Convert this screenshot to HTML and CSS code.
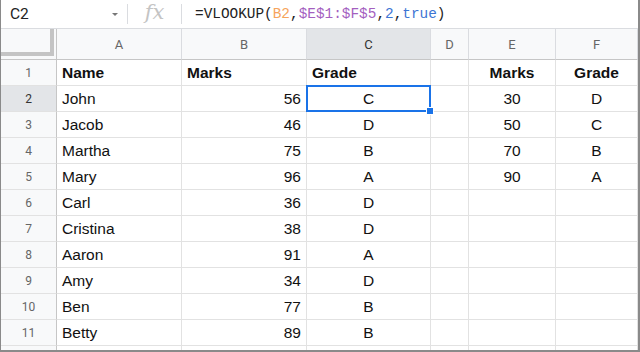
FILE: index.html
```html
<!DOCTYPE html>
<html lang="en">

<head>
     <meta charset="UTF-8" />
     <title>VLOOKUP grades</title>
     <meta name="viewport" content="width=device-width, initial-scale=1" />
     <link rel="stylesheet" href="styles.css">
</head>

<body>
     <div class="frame">
          <div class="formula-bar">
               <div class="name-box">
                    <span>C2</span>
                    <span class="caret"></span>
               </div>
               <div class="fx">fx</div>
               <div class="formula">=VLOOKUP(<span class="ref-b">B2</span>,<span class="ref-e">$E$1:$F$5</span>,<span class="num">2</span>,<span class="bool">true</span>)</div>
          </div>

          <div class="sheet">
               <div class="corner"><div class="freeze"></div></div>
               <div class="col-head">A</div>
               <div class="col-head">B</div>
               <div class="col-head active">C</div>
               <div class="col-head">D</div>
               <div class="col-head">E</div>
               <div class="col-head">F</div>

               <div class="row-head">1</div>
               <div class="cell bold">Name</div>
               <div class="cell bold">Marks</div>
               <div class="cell bold">Grade</div>
               <div class="cell"></div>
               <div class="cell bold center">Marks</div>
               <div class="cell bold center">Grade</div>

               <div class="row-head active">2</div>
               <div class="cell">John</div>
               <div class="cell right">56</div>
               <div class="cell center selected">C<span class="handle"></span></div>
               <div class="cell"></div>
               <div class="cell center">30</div>
               <div class="cell center">D</div>

               <div class="row-head">3</div>
               <div class="cell">Jacob</div>
               <div class="cell right">46</div>
               <div class="cell center">D</div>
               <div class="cell"></div>
               <div class="cell center">50</div>
               <div class="cell center">C</div>

               <div class="row-head">4</div>
               <div class="cell">Martha</div>
               <div class="cell right">75</div>
               <div class="cell center">B</div>
               <div class="cell"></div>
               <div class="cell center">70</div>
               <div class="cell center">B</div>

               <div class="row-head">5</div>
               <div class="cell">Mary</div>
               <div class="cell right">96</div>
               <div class="cell center">A</div>
               <div class="cell"></div>
               <div class="cell center">90</div>
               <div class="cell center">A</div>

               <div class="row-head">6</div>
               <div class="cell">Carl</div>
               <div class="cell right">36</div>
               <div class="cell center">D</div>
               <div class="cell"></div>
               <div class="cell"></div>
               <div class="cell"></div>

               <div class="row-head">7</div>
               <div class="cell">Cristina</div>
               <div class="cell right">38</div>
               <div class="cell center">D</div>
               <div class="cell"></div>
               <div class="cell"></div>
               <div class="cell"></div>

               <div class="row-head">8</div>
               <div class="cell">Aaron</div>
               <div class="cell right">91</div>
               <div class="cell center">A</div>
               <div class="cell"></div>
               <div class="cell"></div>
               <div class="cell"></div>

               <div class="row-head">9</div>
               <div class="cell">Amy</div>
               <div class="cell right">34</div>
               <div class="cell center">D</div>
               <div class="cell"></div>
               <div class="cell"></div>
               <div class="cell"></div>

               <div class="row-head">10</div>
               <div class="cell">Ben</div>
               <div class="cell right">77</div>
               <div class="cell center">B</div>
               <div class="cell"></div>
               <div class="cell"></div>
               <div class="cell"></div>

               <div class="row-head">11</div>
               <div class="cell">Betty</div>
               <div class="cell right">89</div>
               <div class="cell center">B</div>
               <div class="cell"></div>
               <div class="cell"></div>
               <div class="cell"></div>

               <div class="row-head"></div>
               <div class="cell"></div>
               <div class="cell"></div>
               <div class="cell"></div>
               <div class="cell"></div>
               <div class="cell"></div>
               <div class="cell"></div>
          </div>
     </div>
</body>

</html>
```

FILE: styles.css
```css
* {
     box-sizing: border-box;
     margin: 0;
     padding: 0;
}

body {
     font-family: "Liberation Sans", Arial, sans-serif;
     background: #fff;
     width: 640px;
     height: 352px;
     overflow: hidden;
}

.frame {
     width: 640px;
     height: 352px;
     border-left: 1px solid #8a8a8a;
     border-right: 2px solid #8a8a8a;
     border-bottom: 2px solid #8a8a8a;
     overflow: hidden;
}

.formula-bar {
     display: flex;
     align-items: center;
     height: 29px;
     border-bottom: 1px solid #dadce0;
}

.name-box {
     width: 127px;
     display: flex;
     align-items: center;
     justify-content: space-between;
     padding: 0 9px 0 9px;
     font-family: Roboto, "Liberation Sans", sans-serif;
     font-size: 15.5px;
     color: #222;
     border-right: 1px solid #dadce0;
     height: 20px;
}

.caret {
     width: 0;
     height: 0;
     border-left: 3px solid transparent;
     border-right: 3px solid transparent;
     border-top: 3px solid #777;
}

.fx {
     width: 54px;
     height: 20px;
     border-right: 1px solid #dadce0;
     text-align: center;
     font-family: "DejaVu Serif", serif;
     font-style: italic;
     font-size: 21px;
     line-height: 17px;
     color: #c4c4c4;
}

.formula {
     padding-left: 13px;
     font-family: "Liberation Mono", monospace;
     font-size: 14.4px;
     color: #222;
}

.ref-b {
     color: #f6a45c;
}

.ref-e {
     color: #a45fbf;
}

.num,
.bool {
     color: #3d75d4;
}

.sheet {
     display: grid;
     grid-template-columns: 56px 125px 125px 124px 38px 87px 82px;
     grid-template-rows: 31px repeat(11, 26px) 26px;
}

.corner {
     background: #f8f9fa;
     border-right: 1px solid #c6c6c6;
     border-bottom: 1px solid #c6c6c6;
}

.freeze {
     width: 53px;
     height: 27px;
     border-right: 4px solid #c4c4c4;
     border-bottom: 4px solid #c4c4c4;
}

.col-head {
     background: #f8f9fa;
     border-right: 1px solid #dadce0;
     border-bottom: 1px solid #c6c6c6;
     display: flex;
     align-items: center;
     justify-content: center;
     font-family: Roboto, "Liberation Sans", sans-serif;
     font-size: 13px;
     color: #666;
     padding-top: 1px;
}

.row-head {
     background: #f8f9fa;
     border-right: 1px solid #c6c6c6;
     border-bottom: 1px solid #e2e2e2;
     display: flex;
     align-items: center;
     justify-content: center;
     font-family: Roboto, "Liberation Sans", sans-serif;
     font-size: 12px;
     color: #666;
}

.col-head.active,
.row-head.active {
     background: #e3e5e8;
     color: #333;
}

.cell {
     border-right: 1px solid #e2e2e2;
     border-bottom: 1px solid #e2e2e2;
     display: flex;
     align-items: center;
     padding: 0 5px;
     font-size: 15.5px;
     color: #111;
     white-space: nowrap;
}

.bold {
     font-weight: bold;
}

.right {
     justify-content: flex-end;
}

.center {
     justify-content: center;
}

.selected {
     position: relative;
}

.selected::after {
     content: "";
     position: absolute;
     top: -1px;
     left: -1px;
     right: -1px;
     bottom: -1px;
     border: 2px solid #1a73e8;
}

.handle {
     position: absolute;
     right: -4px;
     bottom: -4px;
     width: 8px;
     height: 8px;
     background: #1a73e8;
     border: 1px solid #fff;
     z-index: 1;
}
```
